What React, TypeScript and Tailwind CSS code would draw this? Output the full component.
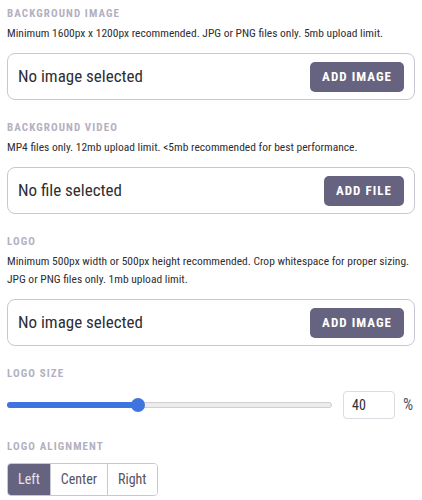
import { useState } from 'react';

function FieldLabel({ children }: { children: string }) {
  return (
    <h3 className="text-[11px] leading-[14px] font-bold tracking-[0.1em] uppercase text-[#b3b0c0]">{children}</h3>
  );
}

function UploadBox({ placeholder, action }: { placeholder: string; action: string }) {
  return (
    <div className="flex items-center justify-between h-[47px] border border-[#c9c7d3] rounded-[8px] pl-[10px] pr-[10px]">
      <span className="text-[17px] text-[#2e2e33]">{placeholder}</span>
      <button className="h-[30px] px-[12px] rounded-[5px] bg-[#65637f] text-white text-[13px] font-bold tracking-[0.08em]">
        {action}
      </button>
    </div>
  );
}

const TRACK = 325;
const THUMB = 14;

export default function App() {
  const [size, setSize] = useState(40);
  const [align, setAlign] = useState<'left' | 'center' | 'right'>('left');
  const thumbLeft = (size / 100) * (TRACK - THUMB);

  return (
    <div className="bg-white px-[7px] pt-[7px] pb-4 font-['Roboto',sans-serif] font-stretch-condensed text-[#2e2e33]">
      <FieldLabel>Background Image</FieldLabel>
      <p className="mt-[3px] text-[11.5px] leading-[18px]">
        Minimum 1600px x 1200px recommended. JPG or PNG files only. 5mb upload limit.
      </p>
      <div className="mt-[11px]">
        <UploadBox placeholder="No image selected" action="ADD IMAGE" />
      </div>

      <div className="mt-[21px]">
        <FieldLabel>Background Video</FieldLabel>
      </div>
      <p className="mt-[3px] text-[11.5px] leading-[18px]">
        MP4 files only. 12mb upload limit. &lt;5mb recommended for best performance.
      </p>
      <div className="mt-[11px]">
        <UploadBox placeholder="No file selected" action="ADD FILE" />
      </div>

      <div className="mt-[21px]">
        <FieldLabel>Logo</FieldLabel>
      </div>
      <p className="mt-[3px] text-[11.5px] leading-[18px]">
        Minimum 500px width or 500px height recommended. Crop whitespace for proper sizing. JPG or PNG files only. 1mb upload limit.
      </p>
      <div className="mt-[11px]">
        <UploadBox placeholder="No image selected" action="ADD IMAGE" />
      </div>

      <div className="mt-[21px]">
        <FieldLabel>Logo Size</FieldLabel>
      </div>
      <div className="mt-[10px] flex items-center">
        <div className="relative w-[325px] h-[14px] flex items-center">
          <div className="w-full h-[6px] rounded-full bg-[#ececec] border border-[#cfcfcf]" />
          <div className="absolute left-0 h-[6px] rounded-full bg-[#3f73e0]" style={{ width: `${thumbLeft + THUMB / 2}px` }} />
          <div className="absolute w-[14px] h-[14px] rounded-full bg-[#3f73e0]" style={{ left: `${thumbLeft}px` }} />
        </div>
        <input
          value={size}
          onChange={(e) => setSize(Math.min(100, Number(e.target.value) || 0))}
          className="ml-[11px] w-[52px] h-[28px] border border-[#dcdbe2] rounded-[4px] px-[8px] text-[14px] text-[#2e2e33] outline-none"
        />
        <span className="ml-[8px] text-[16px] text-[#55535f]">%</span>
      </div>

      <div className="mt-[21px]">
        <FieldLabel>Logo Alignment</FieldLabel>
      </div>
      <div className="mt-[9px] inline-flex border border-[#c9c7d3] rounded-[4px] overflow-hidden">
        {(['left', 'center', 'right'] as const).map((a, i) => (
          <button
            key={a}
            onClick={() => setAlign(a)}
            className={`h-[31px] px-[10px] text-[14px] ${i > 0 ? 'border-l border-[#c9c7d3]' : ''} ${
              align === a ? 'bg-[#65637f] text-[#e6e5ee] border-[#3a3850]' : 'bg-white text-[#55535f]'
            }`}
          >
            {a === 'left' ? 'Left' : a === 'center' ? 'Center' : 'Right'}
          </button>
        ))}
      </div>
    </div>
  );
}
